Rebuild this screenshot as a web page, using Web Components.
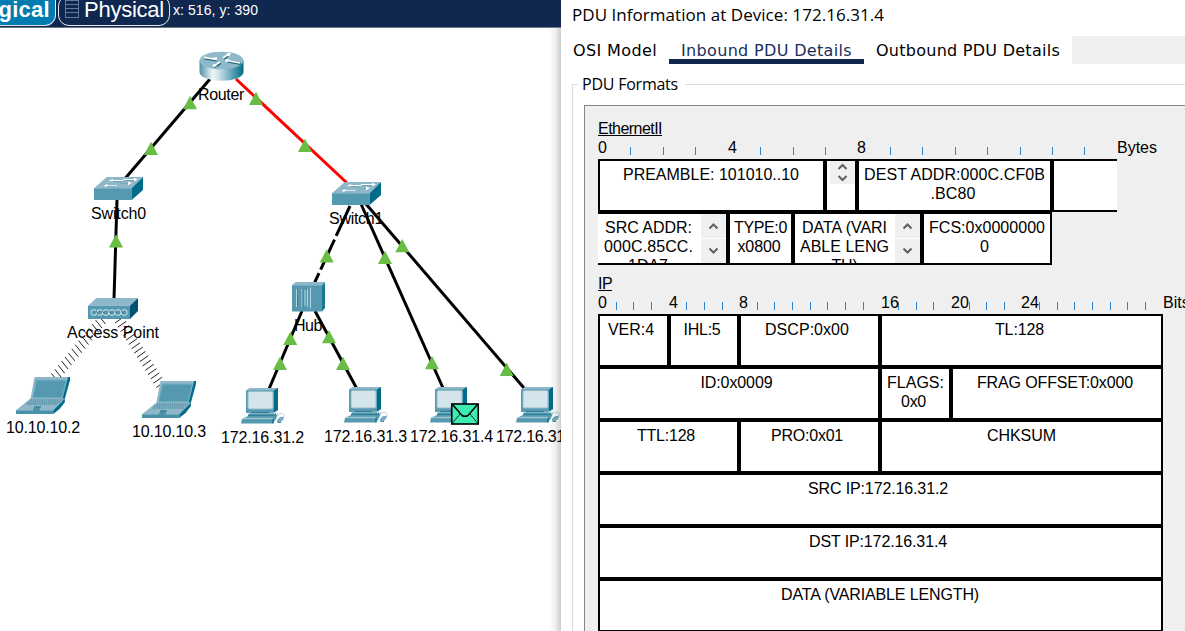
<!DOCTYPE html>
<html lang="en"><head><meta charset="utf-8"><title>PDU Information</title>
<style>
html,body{margin:0;height:100%;overflow:hidden}
body{font:16px/19px "Liberation Sans",Arial,sans-serif;color:#000;background:#fff}
</style></head><body>
<sim-app></sim-app>
<script>
const define=(name,html,init)=>customElements.define(name,class extends HTMLElement{
  connectedCallback(){
    if(this.shadowRoot)return;
    const t=document.createElement('template');
    t.innerHTML=typeof html==='function'?html(this):html;
    this.attachShadow({mode:'open'}).append(t.content.cloneNode(true));
    if(init)init(this);
  }
});

/* One line of text, tracked so that it fills the width given in "w". */
define('fit-text',`<style>:host{display:inline-block;white-space:nowrap}span{white-space:pre}</style><span><slot></slot></span>`,el=>{
  const w=+el.getAttribute('w'),s=el.shadowRoot.querySelector('span'),n=el.textContent.length;
  if(w){const cur=s.getBoundingClientRect().width;const d=(w-cur)/n;s.style.letterSpacing=d+'px';}
});

/* Device artwork */
const art={
router:[46,32,`<defs><linearGradient id="g"><stop offset="0" stop-color="#4d91a8"/><stop offset=".3" stop-color="#edf6f8"/><stop offset=".42" stop-color="#d3e5eb"/><stop offset="1" stop-color="#006d88"/></linearGradient></defs>
<path d="M.5 9.5V21C.5 26 10 29.8 22.5 29.8S44.500 26 44.500 21V9.500Z" fill="url(#g)"/><ellipse cx="22.500" cy="9.500" rx="22" ry="8.800" fill="#8fb9ca"/>
<g fill="none" stroke="#1c6479" stroke-width="2.600" transform="translate(.5 .8)"><path d="M5 6.500 17 8.500M24 7 29 3.500M41 12 28 9.500M21 11 15 15"/></g>
<g fill="none" stroke="#fff" stroke-width="1.700"><path d="M5 6.300 17 8.300M24 7 29 3.500M41 12 28 9.500M21 11 15 15"/></g>
<path d="M18 9.300 14 6.300 18 6.500ZM27 2.500 32 2 30 6ZM27 11.500 26 8.500 31 8.600ZM18 15.500 13.500 15.500 14.500 12.500Z" fill="#fff"/>`],
switch:[49,23,`<path d="M0 11.300 12.700 0H49L37.700 11.300Z" fill="#8eb8c9"/><path d="M0 11.300H37.700V23H0Z" fill="#5499b0"/><path d="M37.700 11.300 49 0V13L37.700 23Z" fill="#006c89"/>
<g stroke="#fff" stroke-width="1" fill="none"><path d="M29 2.500h13M17 3.500h12M11 8.800h12"/><path d="M26 6.500h10" stroke="#79a9bc"/></g><path d="m44 2.500-4-1.800v3.600ZM15 3.700l4-1.800v3.500ZM9.500 8.800l4-1.700v3.400ZM38 6l-4-1.500v3.800Z" fill="#fff"/><path d="M17 4.500h11M31 3.500h9M12 9.800h10" stroke="#5c9ab0" stroke-width=".7"/>`],
ap:[50,21,`<path d="M0 7.700 8.400 0H50L42 7.700Z" fill="#8eb8c9"/><path d="M0 7.700H42V21H0Z" fill="#5499b0"/><path d="M42 7.700 50 0V13L42 21Z" fill="#00526f"/>
<g fill="none" stroke="#d9e9ee" stroke-width="1">${[0,1,2,3,4,5].map(i=>`<circle cx="${5.800+i*6.100}" cy="14.500" r="2.900"/>`).join('')}</g><path d="M8 13l2 3M14.500 13l2 3M21 13l2 3M27 13l2 3M33.500 13l2 3" stroke="#184f61" stroke-width=".8"/>`],
hub:[33,30,`<path d="M0 3.200 3.500 0H33L30 3.200Z" fill="#8eb8c9"/><path d="M0 3.200H30V29.500H0Z" fill="#5499b0"/><path d="M30 3.200 33 0V26L30 29.500Z" fill="#1b7791"/><path d="M4.500 7v18M10 7v18M13 8v16M15.500 7v18M18.500 5.500v21" stroke="#b5d5df" stroke-width="1"/><path d="M5.500 7v18M11 7v18" stroke="#387c92" stroke-width=".8"/>`],
laptop:[54,37,`<path d="M18.500 0H54L48 24H14Z" fill="#8eb8c9"/><path d="M52 0H54V3L48.500 23 46.500 22Z" fill="#006c89"/><path d="M20.500 3.200H50L46 20.500H17Z" fill="#5499b0" stroke="#6ba7bb"/>
<path d="M14.500 21.500H49L37.300 33.300H0Z" fill="#8eb8c9"/><path d="M0 33.300H37.300V37H0Z" fill="#4891a9"/><path d="M37.300 33.300 48.500 22 49 25 43.500 32 37.300 37Z" fill="#006c89"/>
<path d="M14.500 23H46M12 25H44M10.500 27H42" stroke="#387f96" stroke-width="1.200" stroke-dasharray="1.500 .7"/><path d="M19 29.500h6l-2 3h-6Z" fill="#4b90a7"/><path d="M18 30h7M17 33h7" stroke="#2e7991"/>`],
pc:[44,36,`<path d="M0 2.500 4 0H32V22L28 25H0Z" fill="#5499b0"/><path d="M0 2.500 4 0H32L28 2.500Z" fill="#8eb8c9"/><path d="M28 2.500 32 0V22L28 24Z" fill="#006c89"/><rect x="2" y="3.500" width="25" height="17.500" rx="1.500" fill="#d3e5eb" stroke="#92bac9"/>
<path d="M3 24H28V27H3Z" fill="#7fb0c3"/><path d="M5 24.500h18" stroke="#2e7b93"/><path d="M2 26.500H28L30 25V28.500H2Z" fill="#2b7f98"/>
<path d="M0 29 2 28H28L32 26 30 31 27 35.500H-5L-4 31Z" fill="#5499b0"/><path d="M-3 30.500H27" stroke="#9fc6d2" stroke-width="1.500"/><path d="M27 31v4.500" stroke="#217790" stroke-width="1.500"/>
<path d="M30 24.500q2 2 5 1t3 3l-4 2" fill="none" stroke="#bcd9e1" stroke-width="1"/><path d="M31 32l3-3h4l-1 3-3 2.500h-3Z" fill="#77abc0"/><path d="M32 34.500h3" stroke="#3c879e"/>`],
mail:[28,22,`<rect x=".75" y="1" width="26.500" height="20" fill="#3eebb1" stroke="#000" stroke-width="1.600"/><path d="M1.500 1.500 11 12.500Q14 14 17 12.500L26.500 1.500" fill="none" stroke="#000" stroke-width="1.500"/><path d="M1.500 20 9 11M26.500 20 19 11" stroke="#000" stroke-width="1" stroke-dasharray="2 .5"/>`]};
define('net-icon',el=>{const [w,h,g]=art[el.getAttribute('kind')];return `<style>:host{display:block;width:${w}px;height:${h}px}svg{display:block;overflow:visible}</style><svg width="${w}" height="${h}">${g}</svg>`});

/* Cables, link lights and radio waves */
define('net-links',()=>{
  const L=[[210,79,117,188],[117,200,114,299],[361,204,443,388],[366,204,524,388],[302,311,269,389],[315,311,357,389]];
  const T=[[190,96],[256,91.7],[151,141.7],[116,234.3],[305,138.7],[326.7,249.3],[385,250.7],[402.3,239],[290.3,331.7],[329,330],[280,356.7],[343,356.7],[432,356],[506.7,362.7]];
  let w='';
  for(let i=0;i<15;i++){const x=102-i*3.400,y=320+i*4.100;w+=`<path d="M${x-3} ${y-4}l6.500 8"/>`}
  for(let i=0;i<16;i++){const x=119+i*2.750,y=320+i*4.300;w+=`<path d="M${x-4} ${y+3}l8.500-6"/>`}
  return `<style>:host{display:block}svg{display:block}</style><svg width="561" height="603" viewBox="0 28 561 603">
  <g stroke="#000" stroke-width="3">${L.map(l=>`<path d="M${l[0]} ${l[1]}L${l[2]} ${l[3]}"/>`).join('')}<path d="M350 206 314 284" stroke-dasharray="33 4"/><path d="M236 79 347 183" stroke="#f00"/></g>
  <g stroke="#222" stroke-width="1">${w}</g><g fill="#68bd45">${T.map(t=>`<path d="M${t[0]} ${t[1]}l7 13.300h-14Z"/>`).join('')}</g></svg>`});

define('net-canvas',()=>{
  const I=[['router',199,51],['switch',94,177],['switch',332,182],['ap',88,298],['hub',292,282],['laptop',16,377],['laptop',142,381],['pc',246,388],['pc',349,387],['pc',435,387],['pc',521,387],['mail',451,403]];
  const X=[['Router',198,100,46],['Switch0',91,219,55],['Switch1',329,224,54],['Access Point',67,338,92],['Hub',294,331,28],['10.10.10.2',6,433,74],['10.10.10.3',132,437,74],['172.16.31.2',221,443,83],['172.16.31.3',324,442,83],['172.16.31.4',410,442,83],['172.16.31',496,442,69]];
  return `<style>:host{display:block;position:relative;height:603px;overflow:hidden;background:#fff}
  net-icon,fit-text{position:absolute}.edge{position:absolute;right:0;top:0;width:12px;height:100%;background:linear-gradient(90deg,#fff0,#0001 55%,#0003)}</style><net-links></net-links>
  ${I.map(i=>`<net-icon kind="${i[0]}" style="left:${i[1]}px;top:${i[2]-28}px"></net-icon>`).join('')}
  ${X.map(t=>`<fit-text w="${t[3]}" style="left:${t[1]}px;top:${t[2]-43}px">${t[0]}</fit-text>`).join('')}<div class="edge"></div>`});

define('view-bar',`<style>:host{display:flex;height:27px;background:#10284f;border-bottom:1px solid #6f7886;color:#fff;overflow:hidden;align-items:flex-start}
.t{box-sizing:border-box;height:31px;margin-top:-5px;border:1px solid #dfe6ee;display:flex;line-height:27px;font-size:22px}
.l{width:56px;background:#007cb0;justify-content:flex-end;border-left:0;border-radius:0 0 11px 0;padding-right:5px;font-weight:bold}
.p{width:112px;margin-left:2px;border-radius:11px;padding-left:6px}svg{margin:4px 5px 0 0}.c{margin:1px 0 0 3px;font-size:14px}</style>
<div class="t l"><fit-text w="79">Logical</fit-text></div><div class="t p"><svg width="14" height="19"><path d="M0 .5h14M0 4.500h14M0 8.500h14M0 12.500h14M0 17.500h14M.5 0v18M13.500 0v18" stroke="#65779a"/></svg><fit-text w="80">Physical</fit-text></div>
<div class="c"><fit-text w="85">x: 516, y: 390</fit-text></div>`);

define('tab-strip',`<style>:host{display:flex;height:28px;font:16px/28px "DejaVu Sans",Verdana,sans-serif}
div{box-sizing:border-box}fit-text{position:relative;top:1px}.a{width:108px;padding-left:12px}.b{width:195px;padding-left:12px;border-bottom:5px solid #10284f;color:#17305c}.c{width:208px;padding-left:12px}.d{flex:1;background:#efefef}</style>
<div class="a"><fit-text w="84">OSI Model</fit-text></div><div class="b"><fit-text w="171">Inbound PDU Details</fit-text></div><div class="c"><fit-text w="184">Outbound PDU Details</fit-text></div><div class="d"></div>`);

define('scroll-arrows',`<style>:host{display:flex;flex-direction:column;width:25px;background:#f0f0f0;flex:none}
svg{flex:1;min-height:0;width:25px;display:block}path{fill:none;stroke:#606060;stroke-width:2}svg+svg{border-top:1px solid var(--split,#fff)}</style>
<svg viewBox="-12.500 -5.500 25 11"><path d="m-4 2.500 4-4 4 4"/></svg><svg viewBox="-12.500 -5.500 25 11"><path d="m-4-2.500 4 4 4-4"/></svg>`);

/* A field of the header: half of each shared border belongs to each neighbour. */
define('pdu-field',el=>`<style>:host{display:flex;box-sizing:border-box;width:${el.getAttribute('span')}px;height:53px;border:2px solid #000;background:#fff;overflow:hidden;flex:none}
:host([open~=left]){border-left:0}:host([open~=right]){border-right:0}
.x{flex:1;display:flex;flex-direction:column;align-items:center;padding-top:4px;min-width:0;overflow:hidden}
scroll-arrows.s{height:23px;--split:#f0f0f0}</style><div class="x"><slot></slot></div>${el.hasAttribute('scroll')?`<scroll-arrows class="${el.getAttribute('scroll')}"></scroll-arrows>`:''}`);

define('tick-ruler',el=>{
  const ticks=el.getAttribute('ticks').split(' '),nums=el.getAttribute('nums').split(' ').map(n=>n.split('@'));
  return `<style>:host{display:block;height:21px}svg{display:block;overflow:visible;font-size:16px}</style><svg width="587" height="21">
  ${ticks.map(x=>`<rect x="${x-598}" y="9" width="1" height="8" fill="#2f86cc"/>`).join('')}${nums.map(n=>`<text x="${n[1]-598}" y="15">${n[0]}</text>`).join('')}</svg>`});

define('pdu-section',`<style>:host{display:block}h3{margin:0;height:19px;font:inherit;display:flex}h3 span{height:16px;border-bottom:1px solid #000}</style><h3><span><slot name="title"></slot></span></h3><slot></slot>`);
define('pdu-row',`<style>:host{display:flex;height:53px}</style><slot></slot>`);

define('pdu-window',()=>{
  /* each line: text, width, optional extra space after it */
  const F=(span,lines,extra='')=>`<pdu-field span="${span}" ${extra}>${lines.map(l=>`<fit-text w="${l[1]}" style="margin-right:${l[2]||0}px">${l[0]}</fit-text>`).join('')}</pdu-field>`;
  return `<style>:host{display:block;box-sizing:border-box;height:631px;background:#fff;overflow:hidden}
  .title{height:36px;padding-left:11px;font:17px/30px "Open Sans","Noto Sans",sans-serif}
  .group{margin:20px 0 0 11px;padding:20px 0 0 11px;border:1px solid #dcdcdc;border-right:0;border-bottom:0;height:560px}
  .legend{float:left;margin:-33px 0 0 -6px;padding:0 7px 0 4px;background:#fff;font:16px/24px "Open Sans","Noto Sans",sans-serif}
  .panel{box-sizing:border-box;height:540px;background:#efefef;border:1px solid #828790;border-right:0;padding:13px 0 0 13px}
  pdu-section+pdu-section{margin-top:9px}</style>
  <div class="title"><fit-text w="312">PDU Information at Device: 172.16.31.4</fit-text></div><tab-strip></tab-strip>
  <div class="group"><div class="legend"><fit-text w="96">PDU Formats</fit-text></div><div class="panel">
  <pdu-section><fit-text slot="title" w="64">EthernetII</fit-text>
  <tick-ruler ticks="630 663 695 760 793 825 890 922 955 987 1020 1052 1084" nums="0@598 4@728 8@857 Bytes@1117"></tick-ruler>
  <pdu-row>${F(227,[['PREAMBLE: 101010..10',176,1]])}${F(32,[],'scroll="s"')}${F(195,[['DEST ADDR:000C.CF0B',181],['.BC80',45,3]])}${F(65,[],'open="right"')}</pdu-row>
  <pdu-row>${F(130,[['SRC ADDR:',87,2],['000C.85CC.',89,2],['1DA7',40,3]],'open="left" scroll')}${F(65,[['TYPE:0',53],['x0800',43,3]])}${F(129,[['DATA (VARI',85,1],['ABLE LENG',89,1],['TH)',26,1]],'scroll')}${F(130,[['FCS:0x0000000',116],['0',9,5]])}</pdu-row></pdu-section>
  <pdu-section><fit-text slot="title" w="14">IP</fit-text>
  <tick-ruler ticks="616 633 651 686 704 722 757 774 792 810 827 845 863 898 916 933 969 986 1004 1039 1057 1074 1092 1110 1127 1145" nums="0@598 4@669 8@739 16@881 20@951 24@1021 Bits@1163"></tick-ruler>
  <pdu-row>${F(71,[['VER:4',46,5]])}${F(70,[['IHL:5',37,4]])}${F(141,[['DSCP:0x00',84,5]])}${F(283,[['TL:128',49,4]])}</pdu-row>
  <pdu-row>${F(282,[['ID:0x0009',72,5]])}${F(71,[['FLAGS:',57],['0x0',25,4]])}${F(212,[['FRAG OFFSET:0x000',156,4]])}</pdu-row>
  <pdu-row>${F(141,[['TTL:128',58,5]])}${F(141,[['PRO:0x01',72,5]])}${F(283,[['CHKSUM',69]])}</pdu-row>
  <pdu-row>${F(565,[['SRC IP:172.16.31.2',140,5]])}</pdu-row><pdu-row>${F(565,[['DST IP:172.16.31.4',138,5]])}</pdu-row><pdu-row>${F(565,[['DATA (VARIABLE LENGTH)',198,1]])}</pdu-row></pdu-section>
  </div></div>`});

define('sim-app',`<style>:host{display:flex;width:1185px;height:631px;overflow:hidden}main{width:561px;flex:none;overflow:hidden}pdu-window{flex:1;min-width:0}</style><main><view-bar></view-bar><net-canvas></net-canvas></main><pdu-window></pdu-window>`);
</script></body></html>
